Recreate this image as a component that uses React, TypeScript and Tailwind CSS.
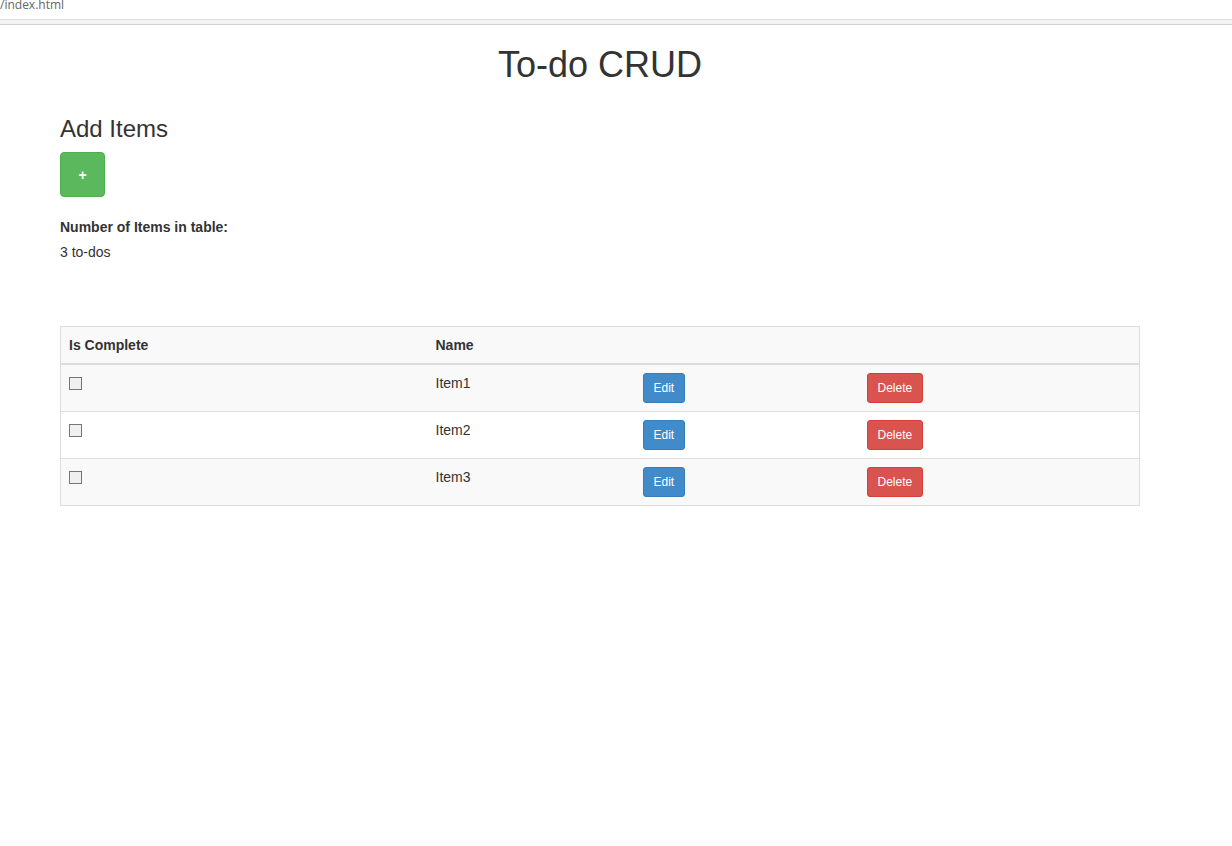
import React from "react";

const items = ["Item1", "Item2", "Item3"];

export default function App() {
  return (
    <div
      className="min-h-[846px] bg-white text-[14px] leading-[20px] text-[#333]"
      style={{ fontFamily: '"Liberation Sans", Arial, Helvetica, sans-serif' }}
    >
      <div className="h-[19px] overflow-hidden">
        <div
          className="mt-[-5px] text-[12px] leading-[20px] text-[#666]"
          style={{ fontFamily: '"Open Sans", "Noto Sans", sans-serif' }}
        >
          /index.html
        </div>
      </div>
      <div className="h-[5px] border-t border-[#dcdcdc] bg-[#f3f3f3]" />
      <div className="h-px bg-[#d0d0d0]" />
      <div className="w-[1140px] pl-[60px]">
        <h1 className="mt-[20px] mb-[10px] text-center text-[36px] leading-[40px] font-normal text-[#333]">
          To-do CRUD
        </h1>
        <h3 className="mt-[31px] mb-[10px] text-[24px] leading-[26px] font-normal text-[#333]">
          Add Items
        </h3>
        <button className="flex h-[45px] w-[45px] items-center justify-center rounded-[4px] border border-[#4cae4c] bg-[#5cb85c] text-[14px] font-bold text-white">
          +
        </button>
        <div className="mt-[20px] font-bold">Number of Items in table:</div>
        <div className="mt-[5px]">3 to-dos</div>
        <table className="mt-[64px] w-[1080px] border-collapse border border-[#ddd]">
          <thead>
            <tr className="bg-[#f9f9f9]">
              <th className="w-[367px] border-b-2 border-[#ddd] p-[8px] text-left font-bold">Is Complete</th>
              <th className="w-[207px] border-b-2 border-[#ddd] p-[8px] text-left font-bold">Name</th>
              <th className="w-[224px] border-b-2 border-[#ddd] p-[8px]"></th>
              <th className="border-b-2 border-[#ddd] p-[8px]"></th>
            </tr>
          </thead>
          <tbody>
            {items.map((name, i) => (
              <tr key={name} className={i % 2 === 0 ? "bg-[#f9f9f9]" : "bg-white"}>
                <td className="border-t border-[#ddd] p-[8px] align-top">
                  <div className="mt-[4px] h-[13px] w-[13px] border border-[#767676] bg-[#f0f0f0]" />
                </td>
                <td className="border-t border-[#ddd] p-[8px] align-top">{name}</td>
                <td className="border-t border-[#ddd] p-[8px] align-top">
                  <button className="h-[30px] rounded-[3px] border border-[#357ebd] bg-[#428bca] px-[10px] text-[12px] leading-[18px] text-white">
                    Edit
                  </button>
                </td>
                <td className="border-t border-[#ddd] p-[8px] align-top">
                  <button className="h-[30px] rounded-[3px] border border-[#d43f3a] bg-[#d9534f] px-[10px] text-[12px] leading-[18px] text-white">
                    Delete
                  </button>
                </td>
              </tr>
            ))}
          </tbody>
        </table>
      </div>
    </div>
  );
}
